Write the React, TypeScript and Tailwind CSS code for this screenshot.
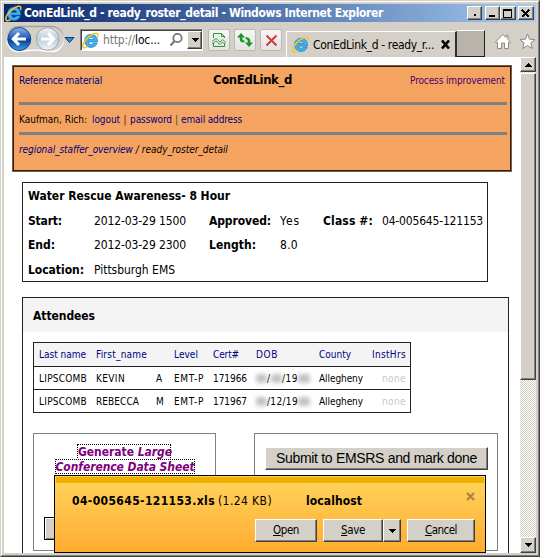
import { useLayoutEffect, useRef } from "react";
import type { ReactNode } from "react";
import { clsx } from "clsx";

// A single line of text whose tracking is adjusted to fill a given width.
function Line({ w, className, children }: { w: number; className?: string; children: ReactNode }) {
  const ref = useRef<HTMLSpanElement>(null);
  useLayoutEffect(() => {
    const el = ref.current;
    if (!el) return;
    el.style.letterSpacing = "0px";
    const natural = el.getBoundingClientRect().width;
    const count = (el.textContent ?? "").length || 1;
    el.style.letterSpacing = `${(w - natural) / count}px`;
  }, [w]);
  return (
    <span ref={ref} className={clsx("inline-block shrink-0 whitespace-pre", className)}>
      {children}
    </span>
  );
}

function IELogo() {
  return (
    <svg width="17" height="17" viewBox="0 0 17 17" className="shrink-0">
      <path d="M9 2.300C5.200 2.300 2.600 5 2.600 8.800C2.600 12.800 5.200 15.400 9 15.400C12 15.400 14.300 13.800 15.200 11.100H11.300C10.800 12 10.100 12.400 9.100 12.400C7.500 12.400 6.500 11.500 6.300 10H15.500C15.800 5.300 13.200 2.300 9 2.300ZM6.400 7.500C6.700 6 7.600 5.200 9 5.200C10.500 5.200 11.400 6 11.600 7.500Z" fill="#3fb2ea" stroke="#1b7cc4" strokeWidth=".7" fillRule="evenodd" />
      <path d="M15.500 5C16.400 2.200 15.500.9 13.300 1.300C9.900 1.900 4.300 6.100 2 10.200C.1 13.600.5 16.200 3.200 15.600C4.200 15.400 5 14.900 5.700 14.500" fill="none" stroke="#f5c430" strokeWidth="1.500" />
    </svg>
  );
}

function NavButtons() {
  return (
    <svg width="72" height="34" viewBox="0 0 72 34" className="shrink-0">
      <defs>
        <linearGradient id="back" x2="0" y2="1">
          <stop stopColor="#8fb4e4" />
          <stop offset=".45" stopColor="#1f5db8" />
          <stop offset=".55" stopColor="#0a3f9c" />
          <stop offset="1" stopColor="#3fa0ee" />
        </linearGradient>
        <linearGradient id="fwd" x2="0" y2="1">
          <stop stopColor="#f1f4f7" />
          <stop offset=".5" stopColor="#bccbd9" />
          <stop offset="1" stopColor="#f0f6fb" />
        </linearGradient>
        <linearGradient id="pill" x2="0" y2="1">
          <stop stopColor="#a5a29c" />
          <stop offset=".5" stopColor="#dedcd7" />
          <stop offset="1" stopColor="#fff" />
        </linearGradient>
      </defs>
      <path d="M15 4.500H47.500A12.500 12.500 0 0 1 47.500 29.500C41 29.500 37 28 31 28S20 29.500 15 29.500A12.500 12.500 0 0 1 15 4.500Z" fill="#d4d0c8" stroke="url(#pill)" strokeWidth="1.600" />
      <circle cx="15.300" cy="17" r="11.500" fill="url(#back)" stroke="#17458f" />
      <path d="M22 17H10M15 11.200L9.300 17L15 22.800" fill="none" stroke="#fff" strokeWidth="3.100" />
      <circle cx="43.600" cy="17" r="11.300" fill="url(#fwd)" stroke="#9aa6b3" />
      <path d="M37 17H49M44 11.200L49.700 17L44 22.800" fill="none" stroke="#fff" strokeWidth="3.100" />
      <path d="M61 15.500H70L65.500 20.500Z" fill="#2b8fd0" stroke="#0d3a70" />
    </svg>
  );
}

function DownArrow() {
  return (
    <svg width="8" height="4" viewBox="0 0 8 4" shapeRendering="crispEdges">
      <path d="M0 0H8L4 4Z" />
    </svg>
  );
}

const raised =
  "border border-t-white border-l-white border-r-[#404040] border-b-[#404040] bg-[#d4d0c8] shadow-[inset_-1px_-1px_0_#808080] flex items-center justify-center shrink-0";

function CaptionButton({ children, className }: { children: ReactNode; className?: string }) {
  return (
    <div className={clsx(raised, "h-[14px]", className)}>
      <svg width="10" height="9" viewBox="0 0 10 9" shapeRendering="crispEdges" fill="none" stroke="#000">
        {children}
      </svg>
    </div>
  );
}

function ToolButton({ children }: { children: ReactNode }) {
  return (
    <div className="flex h-[22px] w-[22px] shrink-0 items-center justify-center rounded-[2px] border border-[#b9b8b5] bg-linear-to-b from-[#f7f7f6] to-[#e3e2df]">
      {children}
    </div>
  );
}

function TitleBar() {
  return (
    <div className="flex h-[18px] items-center bg-linear-to-r from-[#0a246a] to-[#a6caf0] pl-[1px]">
      <IELogo />
      <Line w={359} className="ml-[2px] text-[12px] leading-[18px] font-bold text-white">
        ConEdLink_d - ready_roster_detail - Windows Internet Explorer
      </Line>
      <div className="ml-auto flex pr-[2px]">
        <CaptionButton className="w-[15px]"><path d="M4 6H6" strokeWidth="2" /></CaptionButton>
        <CaptionButton className="ml-[3px] w-[15px]"><path d="M1 7H7" strokeWidth="2" /></CaptionButton>
        <CaptionButton className="w-[16px]"><path d="M.500 .500H8.500V8.500H.500ZM0 1.500H9" /></CaptionButton>
        <CaptionButton className="ml-[2px] w-[16px]"><path d="M1 1L8 8M8 1L1 8" strokeWidth="1.900" /></CaptionButton>
      </div>
    </div>
  );
}

function Toolbar() {
  return (
    <div className="flex h-[35px] items-start">
      <NavButtons />
      <div className="mt-[7px] ml-[4px] flex h-[22px] w-[123px] shrink-0 items-center border border-t-[#808080] border-r-white border-b-white border-l-[#808080] bg-white pl-[1px] shadow-[inset_1px_1px_0_#404040]">
        <IELogo />
        <Line w={57} className="ml-[4px] text-[12px] leading-[18px] text-[#777]">
          http://<span className="text-black">loc...</span>
        </Line>
        <svg width="15" height="16" viewBox="0 0 15 16" className="ml-[9px] shrink-0" fill="none" stroke="#777">
          <circle cx="8.500" cy="6" r="4.200" strokeWidth="1.800" />
          <path d="M5.500 9L1.500 13.500" strokeWidth="2.200" />
        </svg>
        <div className={clsx(raised, "ml-auto h-[18px] w-[15px]")}><DownArrow /></div>
      </div>
      <div className="mt-[7px] ml-[5px] flex gap-[4px]">
        <ToolButton>
          <svg width="14" height="16" viewBox="0 0 14 16" fill="none" stroke="#2f9338">
            <path d="M1.500 6V1.500H9.500L12.500 4.500V6M9.500 1.500V4.500H12.500M1.500 11V14.500H12.500V11" />
            <path d="M0 9.500L4 6.500L8 10L10.500 7.500L14 10.500M0 12L4 9L8 12.500L10.500 10L13 12" strokeWidth=".9" />
          </svg>
        </ToolButton>
        <ToolButton>
          <svg width="16" height="14" viewBox="0 0 16 14" fill="#159a25">
            <path d="M4 0L8 4.500H5.300V6Q5.300 7.500 7.500 7.500V9.500Q2.700 9.800 2.700 6V4.500H0Z" />
            <path d="M12 14L8 9.500H10.700V8Q10.700 6 8.500 6V4.200Q13.300 4 13.300 8V9.500H16Z" />
          </svg>
        </ToolButton>
        <ToolButton>
          <svg width="13" height="13" viewBox="0 0 13 13" stroke="#cf3b3f" strokeWidth="2">
            <path d="M1.500 1.500L11.500 11.500M11.500 1.500L1.500 11.500" />
          </svg>
        </ToolButton>
      </div>
      <div className="mt-[9px] ml-[4px] flex h-[26px] w-[171px] shrink-0 items-center border-t border-r-2 border-l border-t-white border-r-[#303030] border-l-white pl-[5px]">
        <IELogo />
        <Line w={121} className="ml-[4px] pt-[1px] text-[12px] leading-[20px]">ConEdLink_d - ready_r...</Line>
        <svg width="9" height="9" viewBox="0 0 9 9" className="ml-[7px]" stroke="#000" strokeWidth="2.600">
          <path d="M1 .5L8 8.500M8 .5L1 8.500" />
        </svg>
      </div>
      <div className="mt-[8px] h-[27px] w-[28px] shrink-0 border-t border-r border-b border-t-white border-r-[#202020] border-b-[#202020] bg-[#b8b4ac]" />
      <svg width="16" height="17" viewBox="0 0 16 17" className="mt-[11px] ml-[10px] shrink-0" fill="#fff" stroke="#8b8984">
        <path d="M8 1.500L11 4.500V2.500H13V6.500L15.500 9L14.500 10L13.500 9.300V15.500H9.500V10H6.500V15.500H2.500V9.300L1.500 10L.5 9Z" />
      </svg>
      <svg width="17" height="17" viewBox="0 0 17 17" className="mt-[11px] ml-[8px] shrink-0" fill="#fff" stroke="#8b8984">
        <path d="M8.500 1L10.500 6.200L16 6.500L11.800 10L13.300 15.500L8.500 12.500L3.700 15.500L5.200 10L1 6.500L6.500 6.200Z" />
      </svg>
    </div>
  );
}

function PageHeader() {
  return (
    <div className="ml-[8px] h-[107px] w-[500px] shrink-0 border border-[#8a5a35]">
      <div className="h-full border border-[#222] bg-[#f4a460] px-[5px] text-[10px]">
        <div className="flex h-[27px] items-center">
          <Line w={83} className="text-[#000080]">Reference material</Line>
          <Line w={79} className="mb-[2px] ml-[111px] text-[13px] font-bold">ConEdLink_d</Line>
          <Line w={95} className="ml-auto text-[#4b0072]">Process improvement</Line>
        </div>
        <div className="mt-[8px] h-[3px] w-[488px] bg-[#808080]" />
        <div className="flex h-[27px] items-center pt-[2px] text-[#000080]">
          <Line w={68} className="mr-[5px] text-black">Kaufman, Rich:</Line>
          <Line w={28}>logout</Line>
          <span className="w-[10px] text-center text-[#800000]">|</span>
          <Line w={42}>password</Line>
          <span className="w-[9px] text-center text-[#006040]">|</span>
          <Line w={61}>email address</Line>
        </div>
        <div className="h-[3px] w-[488px] bg-[#808080]" />
        <div className="flex h-[29px] items-center italic">
          <Line w={114} className="text-[#000080]">regional_staffer_overview</Line>
          <span className="w-[9px] text-center">/</span>
          <Line w={86}>ready_roster_detail</Line>
        </div>
      </div>
    </div>
  );
}

function ClassInfo() {
  return (
    <div className="mt-[10px] ml-[18px] h-[100px] w-[466px] shrink-0 border border-[#222] pl-[5px] text-[12px]">
      <div className="flex h-[25px] items-center font-bold"><Line w={202}>Water Rescue Awareness- 8 Hour</Line></div>
      <div className="grid grid-cols-[66px_115px_71px_43px_59px_auto] grid-rows-[25px_24px_25px] items-center">
        <Line w={34} className="justify-self-start font-bold">Start:</Line>
        <Line w={92} className="justify-self-start">2012-03-29 1500</Line>
        <Line w={62} className="justify-self-start font-bold">Approved:</Line>
        <Line w={20} className="justify-self-start">Yes</Line>
        <Line w={50} className="justify-self-start font-bold">Class #:</Line>
        <Line w={101} className="justify-self-start">04-005645-121153</Line>
        <Line w={27} className="justify-self-start font-bold">End:</Line>
        <Line w={92} className="justify-self-start">2012-03-29 2300</Line>
        <Line w={47} className="justify-self-start font-bold">Length:</Line>
        <Line w={18} className="col-span-3 justify-self-start">8.0</Line>
        <Line w={56} className="justify-self-start font-bold">Location:</Line>
        <Line w={81} className="justify-self-start">Pittsburgh EMS</Line>
      </div>
    </div>
  );
}

function Smudge({ w }: { w: "month" | "year" }) {
  return (
    <span className={clsx("inline-block h-[9px] rounded-[3px] bg-[#999] opacity-60 blur-[2px]", w === "month" ? "w-[11px]" : "w-[12px]")} />
  );
}

const row = "grid grid-cols-[57px_60px_18px_39px_43px_63px_48px_38px] items-center pl-[5px]";

function Attendees() {
  return (
    <div className={"h-[71px] w-[378px] border border-[#222] text-[10px]"}>
      <div className={clsx(row, "h-[24px] border-b border-[#222] bg-[#f4f4f4] text-[#000080]")}>
        <span><Line w={47}>Last name</Line></span>
        <span className="col-span-2"><Line w={51}>First_name</Line></span>
        <span><Line w={24}>Level</Line></span>
        <span><Line w={26}>Cert#</Line></span>
        <span><Line w={22}>DOB</Line></span>
        <span><Line w={32}>County</Line></span>
        <span className="pl-[5px]"><Line w={34}>InstHrs</Line></span>
      </div>
      <div className={clsx(row, "h-[23px] border-b border-[#222]")}>
        <span><Line w={48}>LIPSCOMB</Line></span>
        <span><Line w={29}>KEVIN</Line></span>
        <span><Line w={7}>A</Line></span>
        <span><Line w={30}>EMT-P</Line></span>
        <span><Line w={34}>171966</Line></span>
        <span className="flex items-center"><Smudge w="month" /><Line w={4}>/</Line><Smudge w="month" /><Line w={16}>/19</Line><Smudge w="year" /></span>
        <span><Line w={44}>Allegheny</Line></span>
        <span className="pl-[15px] text-[#c8c8c8]"><Line w={24}>none</Line></span>
      </div>
      <div className={clsx(row, "h-[22px]")}>
        <span><Line w={48}>LIPSCOMB</Line></span>
        <span><Line w={43}>REBECCA</Line></span>
        <span><Line w={8}>M</Line></span>
        <span><Line w={30}>EMT-P</Line></span>
        <span><Line w={34}>171967</Line></span>
        <span className="flex items-center"><Smudge w="month" /><Line w={31}>/12/19</Line><Smudge w="year" /></span>
        <span><Line w={44}>Allegheny</Line></span>
        <span className="pl-[15px] text-[#c8c8c8]"><Line w={24}>none</Line></span>
      </div>
    </div>
  );
}

function AttendeesPanel() {
  return (
    <div className="mt-[15px] ml-[18px] h-[280px] w-[487px] shrink-0 border border-[#222]">
      <div className="flex h-[34px] items-center bg-[#f4f4f4] pt-[1px] pl-[10px] text-[12px] font-bold"><Line w={62}>Attendees</Line></div>
      <div className="px-[10px] pt-[10px]"><Attendees /></div>
      <div className="mt-[20px] flex gap-[38px] pl-[10px]">
        <div className="flex h-[118px] w-[183px] flex-col items-center border border-[#808080] pt-[10px] text-[12px] font-bold text-[#800080]">
          <div className="mr-px flex h-[14px] w-[94px] items-center border border-b-0 border-dotted border-black"><Line w={94}>Generate <i>Large</i></Line></div>
          <div className="mt-px flex h-[15px] w-[140px] items-center border border-dotted border-black"><Line w={139} className="italic">Conference Data Sheet</Line></div>
          <div className="mt-[43px] ml-[10px] h-[23px] w-[90px] self-start border border-black bg-[#d4d0c8] shadow-[inset_1px_1px_0_#fff,inset_-1px_-1px_0_#808080]" />
        </div>
        <div className="h-[118px] w-[244px] border border-[#808080] pt-[13px] pl-[10px]">
          <div className={clsx(raised, "h-[23px] w-[223px] font-['Liberation_Sans',sans-serif] text-[14px]")}>
            <Line w={201}>Submit to EMSRS and mark done</Line>
          </div>
        </div>
      </div>
    </div>
  );
}

function DownloadBar() {
  return (
    <div className="absolute top-[418px] left-[50px] h-[78px] w-[432px] border border-black bg-linear-to-b from-[#ffd55c] to-[#ffab2e] p-px">
      <div className="h-[6px] bg-[#f0ae00]" />
      <div className="flex h-[36px] items-center pl-[16px] text-[12px]">
        <Line w={143} className="font-bold">04-005645-121153.xls</Line>
        <Line w={54} className="ml-[3px]">(1.24 KB)</Line>
        <Line w={56} className="ml-[34px] font-bold">localhost</Line>
        <svg width="9" height="9" viewBox="0 0 9 9" className="mr-[9px] mb-[9px] ml-auto" stroke="#a9863f" strokeWidth="2.200">
          <path d="M1 1L8 8M8 1L1 8" />
        </svg>
      </div>
      <div className="flex pl-[199px] text-[11.500px]">
        <div className={clsx(raised, "h-[23px] w-[62px]")}><Line w={26}><u>O</u>pen</Line></div>
        <div className={clsx(raised, "ml-[6px] h-[23px] w-[60px]")}><Line w={24}><u>S</u>ave</Line></div>
        <div className={clsx(raised, "h-[23px] w-[18px]")}><DownArrow /></div>
        <div className={clsx(raised, "ml-[6px] h-[23px] w-[68px]")}><Line w={32}><u>C</u>ancel</Line></div>
      </div>
    </div>
  );
}

function ScrollBar() {
  return (
    <div className="flex w-[16px] shrink-0 flex-col bg-[repeating-conic-gradient(#d4d0c8_0_25%,#fff_0_50%)] bg-size-[2px_2px]">
      <div className={clsx(raised, "h-[15px]")}><div className="rotate-180"><DownArrow /></div></div>
      <div className={clsx(raised, "mt-px h-[307px]")} />
      <div className={clsx(raised, "mt-auto h-[16px]")}><DownArrow /></div>
    </div>
  );
}

export default function App() {
  return (
    <div className="h-[557px] w-[540px] overflow-hidden border border-t-[#d4d0c8] border-r-[#404040] border-b-[#404040] border-l-[#d4d0c8] bg-[#d4d0c8] font-['DejaVu_Sans_Condensed','DejaVu_Sans',sans-serif] text-black">
      <div className="h-full border border-t-white border-r-[#808080] border-b-[#808080] border-l-white p-[2px] pb-[2px]">
        <TitleBar />
        <Toolbar />
        <div className="flex h-[496px]">
          <div className="relative flex h-[496px] w-[516px] shrink-0 flex-col overflow-hidden bg-white pt-[8px]">
            <PageHeader />
            <ClassInfo />
            <AttendeesPanel />
            <DownloadBar />
          </div>
          <ScrollBar />
        </div>
      </div>
    </div>
  );
}
